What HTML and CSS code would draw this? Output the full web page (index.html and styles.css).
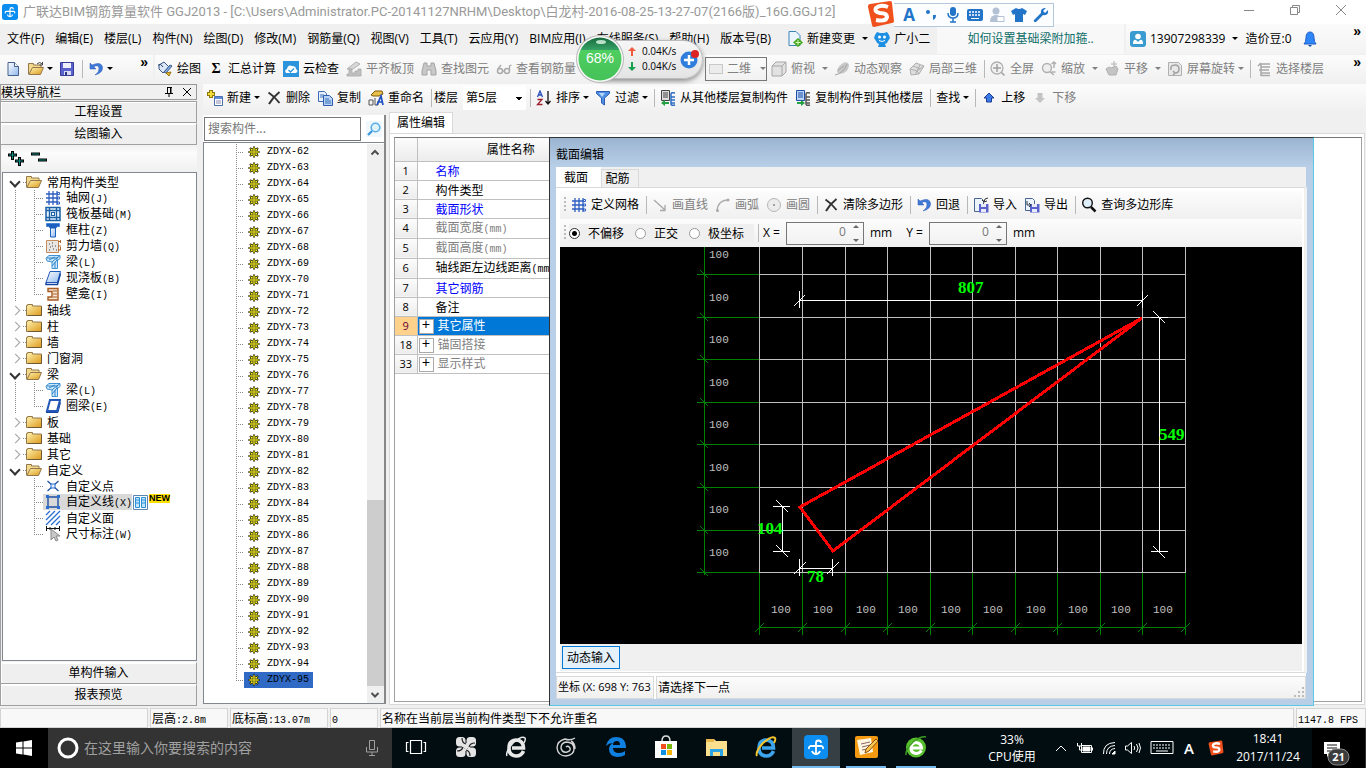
FILE: index.html
```html
<!DOCTYPE html>
<html lang="zh-CN">
<head>
<meta charset="utf-8">
<title>广联达BIM钢筋算量软件 GGJ2013</title>
<link rel="stylesheet" href="styles.css">
</head>
<body>
<svg class="defs" aria-hidden="true">
  <defs>
    <linearGradient id="gFold" x1="0" y1="0" x2="1" y2="1"><stop offset="0" stop-color="#fff3b0"/><stop offset="1" stop-color="#dc9a1c"/></linearGradient>
    <linearGradient id="gBlue" x1="0" y1="0" x2="1" y2="1"><stop offset="0" stop-color="#fff"/><stop offset="1" stop-color="#8fb8ec"/></linearGradient>
    <linearGradient id="gGreen" x1="0" y1="0" x2="0" y2="1"><stop offset="0" stop-color="#176b3e"/><stop offset=".28" stop-color="#35a063"/><stop offset=".29" stop-color="#4fce60"/><stop offset="1" stop-color="#45c258"/></linearGradient>
    <symbol id="logo" viewBox="0 0 24 24"><rect x="0" y="0" width="24" height="24" rx="4" fill="#0c8ef0"/><path d="M12 18V8q0-2.500 2.500-2.500T17 8M6 11h12M6 11q-1.500 1-1 3M18 11q1.500 1 1 3M8 16q1 3 4 3t4-3" fill="none" stroke="#fff" stroke-width="1.800"/></symbol>
    <symbol id="gear" viewBox="0 0 16 16"><path d="M7 3h2v2H7zM7 11h2v2H7zM3 7h2v2H3zM11 7h2v2h-2z" fill="#111"/><path d="M8 2.500v11M2.500 8h11M4 4l8 8M12 4l-8 8" stroke="#111" stroke-width="2"/><circle cx="8" cy="8" r="4" fill="#f8f010" stroke="#222" stroke-width=".8"/><path d="M8 3v10M3 8h10M4.500 4.500l7 7M11.500 4.500l-7 7" stroke="#f8f010"/><path d="M6 6h4v4H6z" fill="none" stroke="#333" stroke-width=".8"/><rect x="7.500" y="7.500" width="1" height="1" fill="#222"/></symbol>
    <symbol id="folder" viewBox="0 0 16 16"><path d="M.5 3.500h1v-1h5v1.500h9v9.500H.5z" fill="url(#gFold)" stroke="#94784a"/><path d="M2 13.500h13.500V5" fill="none" stroke="#6f5a34"/></symbol>
    <symbol id="folderopen" viewBox="0 0 16 16"><path d="M.5 13V2.500h5v1.500h7.500v3" fill="#f2d98c" stroke="#94784a"/><path d="M.8 13.500L4.500 6.500H15.500L12.500 13.500z" fill="url(#gFold)" stroke="#94784a"/></symbol>
    <symbol id="grid" viewBox="0 0 16 16"><path d="M4 1v14M8 1v14M12 1v14M1 4h12M1 8h12M1 12h12" stroke="#2f5fc0" stroke-width="1.300"/><path d="M12.500 2.500h2v2h-2zM12.500 7h2v2h-2zM12.500 12h2v2h-2z" fill="#fff" stroke="#2f5fc0"/></symbol>
    <symbol id="raft" viewBox="0 0 16 16"><rect x="1" y="1.500" width="14" height="13" fill="#e4f0fb" stroke="#1b5fa4" stroke-width="1.500"/><path d="M4.500 1v14M11.500 1v14M1 4.500h14M1 11.500h14" stroke="#1b5fa4" stroke-width="1.300"/><rect x="6.500" y="6.500" width="3" height="3" fill="#fff" stroke="#1b5fa4"/></symbol>
    <symbol id="column" viewBox="0 0 16 16"><path d="M1.500 1.500h13v3h-2l-2 2h-5l-2-2h-2z" fill="#1c5fc0" stroke="#4a86d8"/><path d="M5.500 6h5v9h-5z" fill="url(#gBlue)" stroke="#1c5fc0"/></symbol>
    <symbol id="wall" viewBox="0 0 16 16"><path d="M1.500 2.500h12v12h-12z" fill="#e8e6e2" stroke="#c48a5a"/><path d="M15.500 2v3M13 3.500h3M13 8h3M13 12h3M15.500 9v3" stroke="#b4682c"/><path d="M4 6h1M7 5h1M10 8h1M5 9h1M8 11h1M4 12h1M11 12h1M7 8h1" stroke="#444"/></symbol>
    <symbol id="beam" viewBox="0 0 16 16"><path d="M1 4l3-2.500h11v3l-2.500 2v8H7V8L2 7z" fill="#cfe8fb" stroke="#3f92d4"/><path d="M2 4h10l3-2.500M4 6l6-3M7 8l6-5M7 12l5-6M12 4v3M10 8v6" stroke="#2b84c8" fill="none"/></symbol>
    <symbol id="slab" viewBox="0 0 16 16"><path d="M5 1.500h10.500l-3 11H1z" fill="url(#gBlue)" stroke="#2358b8"/><path d="M1 12.500v2h11.500l3-11" fill="none" stroke="#1545a0" stroke-width="1.500"/></symbol>
    <symbol id="ring" viewBox="0 0 16 16"><path d="M5 2h10l-3 11H2z" fill="none" stroke="#2358b8" stroke-width="2"/><path d="M1 14.500h12l2.500-10" fill="none" stroke="#1545a0"/></symbol>
    <symbol id="niche" viewBox="0 0 16 16"><path d="M3 2.500h10v11.500H3v-3h4V5.500H3z" fill="#f6e6d4" stroke="#a85a20" stroke-width="1.400"/><path d="M8 5h4M8 8h4M8 11h4" stroke="#a85a20"/></symbol>
    <symbol id="pt" viewBox="0 0 16 16"><path d="M2.500 3l11 10M13.500 3l-11 10" stroke="#1d4e9e" stroke-width="1.200"/><rect x="6" y="6" width="4" height="4" fill="#e4f0fc" stroke="#2a6fd0"/></symbol>
    <symbol id="rectn" viewBox="0 0 16 16"><path d="M3 3h10v10H3z" fill="none" stroke="#1d4e9e" stroke-width="1.400"/><path d="M1 1h3v3H1zM12 1h3v3h-3zM1 12h3v3H1zM12 12h3v3h-3z" fill="#2a6fd0"/></symbol>
    <symbol id="hatch" viewBox="0 0 16 16"><path d="M1 5l4-4M1 10l9-9M1 15L15 1M6 15l9-9M11 15l4-4" stroke="#2a6fd0" stroke-width="1.300"/></symbol>
    <symbol id="dim" viewBox="0 0 16 16"><path d="M1.500 0v5M14.500 0v5M1 2.500h14M5 1v3M10 1v3" stroke="#111"/><path d="M6 3v11l3-3 2 4 2-1-2-4h4z" fill="#c8c8c8" stroke="#888"/></symbol>
    <symbol id="new" viewBox="0 0 16 16"><path d="M3 1.500h6.500l4 4v9H3z" fill="url(#gBlue)" stroke="#44608c"/><path d="M9.500 1.500v4h4" fill="#fff" stroke="#44608c"/></symbol>
    <symbol id="open" viewBox="0 0 16 16"><use href="#folderopen"/><path d="M9 3q3-3 5 0M14.500 1v3h-3" fill="none" stroke="#444"/></symbol>
    <symbol id="save" viewBox="0 0 16 16"><path d="M1.500 1.500h13v13h-13z" fill="#5a62cc" stroke="#363c98"/><path d="M4 2h8v5H4z" fill="#eef0fc"/><path d="M5 10h7v4H5z" fill="#d8daf2"/><path d="M6 11h2v3H6z" fill="#30368c"/></symbol>
    <symbol id="undo" viewBox="0 0 16 16"><path d="M2 2v6h6L5.800 5.800Q10 3 11 7q.5 4-4 7 8-2 7.500-8Q13 0 4 4z" fill="#3f7ad8" stroke="#2c58b4" stroke-width=".5"/></symbol>
    <symbol id="paint" viewBox="0 0 16 16"><path d="M2 4l5-3 5 5-6 6-4-4z" fill="#dbe7f6" stroke="#3c5684"/><path d="M1 4q3-2 5 2" fill="none" stroke="#27406c"/><path d="M15 5l-6 7-2-1 6-7z" fill="#7fb0e8" stroke="#3c5684"/><path d="M9 12l5-1-2 4z" fill="#e8b830" stroke="#9c7412"/></symbol>
    <symbol id="cloud" viewBox="0 0 16 16"><rect width="16" height="16" fill="#2b94dc"/><path d="M3 12q-2-3 1-4 1-5 5-3 4 0 4 3 3 2 0 4z" fill="#fff"/><path d="M5.500 9l2 2L11 7.500" fill="none" stroke="#2b94dc" stroke-width="1.300"/></symbol>
    <symbol id="level" viewBox="0 0 16 16"><path d="M1 8l9-7 4 2-7 5z" fill="#d8d8d8" stroke="#b0b0b0"/><path d="M3 8v5H1v2h14V8h-3v2H9v2H6V8z" fill="#c0c0c0" stroke="#a8a8a8" stroke-width=".8"/></symbol>
    <symbol id="bino" viewBox="0 0 16 16"><path d="M3 2h3v3h4V2h3l2 8v4h-5V9H6v5H1v-4z" fill="#c8c8c8" stroke="#a4a4a4"/></symbol>
    <symbol id="glasses" viewBox="0 0 16 16"><circle cx="4" cy="10" r="2.500" fill="none" stroke="#aaa" stroke-width="1.500"/><circle cx="11" cy="10" r="2.500" fill="none" stroke="#aaa" stroke-width="1.500"/><path d="M2 8l3-4M13.500 10V5l2-1M6.500 10h2" fill="none" stroke="#aaa" stroke-width="1.300"/></symbol>
    <symbol id="cube" viewBox="0 0 16 16"><path d="M1 5l4-4h10v10l-4 4H1z" fill="#e2e2e2" stroke="#a6a6a6"/><path d="M1 5h10v10M11 5l4-4" fill="none" stroke="#a6a6a6"/></symbol>
    <symbol id="orbit" viewBox="0 0 16 16"><path d="M9 2q5-2 6 2 0 5-5 8-5 2-7-1 0-5 6-9z" fill="#c8c8c8"/><path d="M1 14Q10 12 13 3M4 9l6-4" fill="none" stroke="#a4a4a4"/></symbol>
    <symbol id="part3d" viewBox="0 0 16 16"><path d="M1 8l6-6 8 3-5 8-8 1z" fill="#dedede" stroke="#b0b0b0"/><path d="M1 8l7 2 7-5M8 10l2 3M4 5l8 3M6 14l2-4 3-6" fill="none" stroke="#b0b0b0"/></symbol>
    <symbol id="full" viewBox="0 0 16 16"><circle cx="7" cy="7" r="6" fill="#f2f2f2" stroke="#b0b0b0" stroke-width="1.300"/><path d="M7 3v8M3 7h8M11.500 11.500l3 3" stroke="#a0a0a0" stroke-width="1.500"/></symbol>
    <symbol id="zoomg" viewBox="0 0 16 16"><circle cx="6" cy="7" r="4.500" fill="#eee" stroke="#b0b0b0" stroke-width="1.400"/><path d="M9 11l4 3M13 1v6M10.500 3l2.500-2 2 2M10.500 11h4" fill="none" stroke="#b0b0b0" stroke-width="1.500"/></symbol>
    <symbol id="hand" viewBox="0 0 16 16"><path d="M2 8l3-2 2 1 5-2 2 3-2 6H5z" fill="#c4c4c4" stroke="#b0b0b0"/><path d="M10 0v6M7 3h6" stroke="#b0b0b0"/></symbol>
    <symbol id="rot" viewBox="0 0 16 16"><path d="M1.500 1.500h10l3 3v10h-13z" fill="#e8e8e8" stroke="#b0b0b0"/><path d="M4 9q-1-5 4-5 4 0 4 4t-4 4M6 10l2 2-2 2" fill="none" stroke="#a0a0a0" stroke-width="1.500"/></symbol>
    <symbol id="floors" viewBox="0 0 16 16"><path d="M5 3h9M5 6h9M3 9h10M5 12h9M5 14.500h9M2 5l3-3M5 3v12" stroke="#a8a8a8" stroke-width="1.500"/></symbol>
    <symbol id="add" viewBox="0 0 16 16"><path d="M4 0v8M0 4h8" stroke="#8c7a10" stroke-width="4"/><path d="M4 1v6M1 4h6" stroke="#f2dc3c" stroke-width="2"/><path d="M7.500 6.500h8v9h-8z" fill="#fff" stroke="#4a6fae"/><path d="M8 8h7" stroke="#5b8ede" stroke-width="2"/><path d="M9 11h5M9 13h5" stroke="#88a"/></symbol>
    <symbol id="x" viewBox="0 0 16 16"><path d="M2.500 2.500Q8 6 13.500 13M13.500 2Q7 7 3 14" fill="none" stroke="#333" stroke-width="2"/></symbol>
    <symbol id="copy" viewBox="0 0 16 16"><path d="M1.500 1.500h6l2 2v8h-8z" fill="#e8f1fd" stroke="#3b6cb8"/><path d="M6.500 5.500h6l3 3v7h-9z" fill="#b8d3f6" stroke="#2c5cac"/><path d="M3 5h4M3 7h3M8 9h4M8 11h6M8 13h6" stroke="#3b6cb8"/></symbol>
    <symbol id="rename" viewBox="0 0 16 16"><path d="M3 5l4-4h7l1 3-4 2H5z" fill="#e8c048" stroke="#7c5a10"/><path d="M1 10h4v5H1zM7 8v7h3v-4" fill="none" stroke="#555"/><path d="M9 15l4-9 2 9M10 12h4" fill="none" stroke="#1e4fc0" stroke-width="1.700"/></symbol>
    <symbol id="sort" viewBox="0 0 16 16"><path d="M1.500 7L4 1l2.500 6M2 5h4" fill="none" stroke="#2850b8" stroke-width="1.300"/><path d="M1.500 9.500h4.500l-4.500 5H6.500" fill="none" stroke="#a02030" stroke-width="1.300"/><path d="M12 1v13M9.500 11l2.500 3 2.500-3" fill="none" stroke="#111" stroke-width="1.300"/></symbol>
    <symbol id="funnel" viewBox="0 0 16 16"><path d="M1.500 1.500h13v2l-5 4.500v7l-3-2V8l-5-4.500z" fill="#4f90e4" stroke="#2a5cb4"/><path d="M4 3h6l-3 4z" fill="#b8d6fa"/></symbol>
    <symbol id="bldfrom" viewBox="0 0 16 16"><path d="M1.500.5h8v10h-8z" fill="#ddd" stroke="#444"/><path d="M3 3h5M3 5h5M3 7h5" stroke="#444"/><path d="M15 3q-4-1-4 1v10q0 2 4 1M11 7h4M11 10h4M11 13h4" fill="none" stroke="#2c6cc0" stroke-width="1.500"/><path d="M9 12H5v-2l-4 3 4 3v-2h4z" fill="#26a044"/></symbol>
    <symbol id="bldto" viewBox="0 0 16 16"><path d="M1.500.5h8v10h-8z" fill="#bdd5f8" stroke="#1d4ea8"/><path d="M3 3h5M3 5h5M3 7h5" stroke="#1d4ea8"/><path d="M15 3q-4-1-4 1v10q0 2 4 1M11 7h4M11 10h4M11 13h4" fill="none" stroke="#555" stroke-width="1.500"/><path d="M2 12h4v-2l4 3-4 3v-2H2z" fill="#26a044"/></symbol>
    <symbol id="up" viewBox="0 0 16 16"><path d="M8 3l5 5h-2.500v4h-5V8H3z" fill="#3a7be8" stroke="#1d3c94"/></symbol>
    <symbol id="down" viewBox="0 0 16 16"><path d="M8 13l5-5h-2.500V3h-5v5H3z" fill="#c4c4c4"/></symbol>
    <symbol id="docadd" viewBox="0 0 16 16"><path d="M2 .5h7l4 4v10H2z" fill="#eaf5fd" stroke="#3d84b8"/><path d="M11 7l5 4.500-5 4.500-5-4.500z" fill="#46a820"/><path d="M11 9v5M8.500 11.500h5" stroke="#d8f8b8"/></symbol>
    <symbol id="face" viewBox="0 0 16 16"><path d="M1 4l2-3 3 1h4l3-1 2 3 1 3-2 3q-1 3-3 3l1 3H4l1-3q-2 0-3-3L0 7z" fill="#1e90e4"/><circle cx="5.500" cy="6" r="1.500" fill="#fff"/><circle cx="10.500" cy="6" r="1.500" fill="#fff"/><path d="M5 9.500q3 2 6 0" fill="none" stroke="#fff"/></symbol>
    <symbol id="user" viewBox="0 0 16 16"><rect width="16" height="16" rx="3" fill="#3a9bd0"/><circle cx="8" cy="5.500" r="2.800" fill="#fff"/><path d="M3 13q0-5 3-4l2 2 2-2q3-1 3 4z" fill="#fff"/></symbol>
    <symbol id="bell" viewBox="0 0 16 16"><path d="M2 13q2-2 2-6 0-6 4-6t4 6q0 4 2 6z" fill="#2f86f6" stroke="#1c5cc8"/><path d="M6 14h4l-2 2z" fill="#184a9c"/></symbol>
    <symbol id="lens" viewBox="0 0 16 16"><circle cx="6.500" cy="6" r="4.800" fill="#dff0fb" stroke="#111" stroke-width="1.400"/><path d="M10 10l4.500 4.500" stroke="#111" stroke-width="2.500"/></symbol>
    <symbol id="lensb" viewBox="0 0 16 16"><rect width="16" height="16" fill="#f0f7fd"/><circle cx="9.500" cy="6.500" r="4.300" fill="#e0f3fd" stroke="#58aee6" stroke-width="1.600"/><path d="M6 10l-4 4" stroke="#3c96d8" stroke-width="2.300"/></symbol>
    <symbol id="line" viewBox="0 0 16 16"><path d="M2 3l11 10M13 8v5.500H8" fill="none" stroke="#a8a8a8" stroke-width="1.300"/></symbol>
    <symbol id="arc" viewBox="0 0 16 16"><path d="M2 14Q3 3 13 3" fill="none" stroke="#b0b0b0" stroke-width="1.400"/><circle cx="2.500" cy="13.500" r="1.500" fill="#aaa"/><circle cx="13" cy="3" r="1.500" fill="#aaa"/></symbol>
    <symbol id="circ" viewBox="0 0 16 16"><circle cx="8" cy="8" r="6.500" fill="#ececec" stroke="#b6b6b6"/><circle cx="8" cy="8" r="1" fill="#888"/></symbol>
    <symbol id="imp" viewBox="0 0 16 16"><path d="M1.500 1.500h7l2 2v11h-9z" fill="#eef4fc" stroke="#4a6490"/><path d="M6 7h9.500v8.500H6z" fill="#5a62cc"/><path d="M8 7h5v3H8zM8 12h5v3H8z" fill="#e8eafa"/><path d="M15 1q-4 0-4 4M9 3l2 2 3-1" fill="none" stroke="#333"/></symbol>
    <symbol id="exp" viewBox="0 0 16 16"><path d="M1.500 1.500h7l2 2v10h-9z" fill="#eef4fc" stroke="#4a6490"/><path d="M6 7h9.500v8.500H6z" fill="#5a62cc"/><path d="M8 7h5v3H8zM8 12h5v3H8z" fill="#e8eafa"/><path d="M3 4v4h4M5 6l2 2-2 2" fill="none" stroke="#234"/></symbol>
    <symbol id="sogou" viewBox="0 0 28 28"><path d="M3 4L23 1q2 0 2 2l2 18q0 2-2 2L7 27q-2 0-2-2L1 7q0-3 2-3z" fill="#f0501c"/><path d="M21 7q-8-3-12 1-2 4 4 5 7 0 7 4-1 5-11 3" fill="none" stroke="#fff" stroke-width="4"/></symbol>
    <symbol id="ie" viewBox="0 0 24 24"><path d="M19.500 16q-2 5-7.500 5-7-.5-7-8 0-7.500 7-8 7.500.5 7.500 8H8" fill="none" stroke="currentColor" stroke-width="3.600"/></symbol>
  </defs>
</svg>

<header class="titlebar">
  <svg class="i16"><use href="#logo"/></svg>
  <h1>广联达BIM钢筋算量软件 GGJ2013 - [C:\Users\Administrator.PC-20141127NRHM\Desktop\白龙村-2016-08-25-13-27-07(2166版)_16G.GGJ12]</h1>
  <div class="winbtns">
    <button aria-label="最小化"><svg viewBox="0 0 12 12"><path d="M1 6.500h10"/></svg></button>
    <button aria-label="还原"><svg viewBox="0 0 12 12"><path d="M1.500 3.500h7v7h-7zM3.500 3.500v-2h7v7h-2"/></svg></button>
    <button aria-label="关闭"><svg viewBox="0 0 12 12"><path d="M1 1l10 10M11 1L1 11"/></svg></button>
  </div>
</header>

<nav class="menubar">
  <div class="menus">
    <button>文件(F)</button><button>编辑(E)</button><button>楼层(L)</button><button>构件(N)</button><button>绘图(D)</button><button>修改(M)</button><button>钢筋量(Q)</button><button>视图(V)</button><button>工具(T)</button><button>云应用(Y)</button><button>BIM应用(I)</button><button>在线服务(S)</button><button>帮助(H)</button><button>版本号(B)</button>
  </div>
  <button class="tb"><svg class="i16"><use href="#docadd"/></svg>新建变更<i class="arr wide"></i></button>
  <button class="tb"><svg class="i16"><use href="#face"/></svg>广小二</button>
  <a class="tip" href="#">如何设置基础梁附加箍..</a>
  <div class="account">
    <button class="tb"><svg class="i16"><use href="#user"/></svg>13907298339<i class="arr wide"></i></button>
    <span>造价豆:0</span>
    <svg class="i16"><use href="#bell"/></svg>
    <button class="more">»</button>
  </div>
</nav>

<div class="toolbar main-tools">
  <div class="group first">
    <button class="tb" aria-label="新建工程"><svg class="i16"><use href="#new"/></svg></button>
    <button class="tb" aria-label="打开"><svg class="i16"><use href="#open"/></svg><i class="arr"></i></button>
    <button class="tb" aria-label="保存"><svg class="i16"><use href="#save"/></svg></button>
    <i class="sep"></i>
    <button class="tb" aria-label="撤销"><svg class="i16"><use href="#undo"/></svg><i class="arr"></i></button>
    <button class="more">»</button>
  </div>
  <div class="group second">
    <button class="tb"><svg class="i16"><use href="#paint"/></svg>绘图</button>
    <button class="tb"><b class="sigma">Σ</b>汇总计算</button>
    <button class="tb"><svg class="i16"><use href="#cloud"/></svg>云检查</button>
    <button class="tb off"><svg class="i16"><use href="#level"/></svg>平齐板顶</button>
    <button class="tb off"><svg class="i16"><use href="#bino"/></svg>查找图元</button>
    <button class="tb off"><svg class="i16"><use href="#glasses"/></svg>查看钢筋量</button>
  </div>
  <div class="group third">
    <button class="tb off dimcombo"><i class="swatch"></i>二维<i class="arr"></i></button>
    <button class="tb off"><svg class="i16"><use href="#cube"/></svg>俯视<i class="arr wide"></i></button>
    <button class="tb off"><svg class="i16"><use href="#orbit"/></svg>动态观察</button>
    <button class="tb off"><svg class="i16"><use href="#part3d"/></svg>局部三维</button>
    <i class="sep"></i>
    <button class="tb off"><svg class="i16"><use href="#full"/></svg>全屏</button>
    <button class="tb off"><svg class="i16"><use href="#zoomg"/></svg>缩放<i class="arr wide"></i></button>
    <button class="tb off"><svg class="i16"><use href="#hand"/></svg>平移<i class="arr wide"></i></button>
    <button class="tb off"><svg class="i16"><use href="#rot"/></svg>屏幕旋转<i class="arr"></i></button>
    <i class="sep"></i>
    <button class="tb off"><svg class="i16"><use href="#floors"/></svg>选择楼层</button>
    <button class="more">»</button>
  </div>
</div>

<main class="work">
  <aside class="nav">
    <div class="navhead"><span>模块导航栏</span>
      <svg viewBox="0 0 10 10" class="i10"><path d="M3 .5h5M3.500 1v5M7 1v5M6.500 1v5M1 6.500h8M5 7v3" stroke="#000" fill="none"/></svg>
      <svg viewBox="0 0 10 10" class="i10"><path d="M1 1l8 8M9 1L1 9" stroke="#000"/></svg></div>
    <button class="bigbtn">工程设置</button>
    <button class="bigbtn">绘图输入</button>
    <div class="expand">
      <svg width="42" height="18" viewBox="0 0 42 18"><path d="M1 6h9M5.500 2v9M8 12h9M12.500 8v9M24 5h9M31 11h9" stroke="#000" stroke-width="3"/><path d="M2 6h7M5.500 3v7M9 12h7M12.500 9v7M25 5h7M32 11h7" stroke="#118a80"/></svg>
    </div>
    <ul class="tree">
      <li><i class="chev open"></i><i class="stub"></i><svg class="i16"><use href="#folderopen"/></svg>常用构件类型</li>
      <li class="sub run"><i class="branch"></i><svg class="i16"><use href="#grid"/></svg><span>轴网<span class="m">(J)</span></span></li>
      <li class="sub run"><i class="branch"></i><svg class="i16"><use href="#raft"/></svg><span>筏板基础<span class="m">(M)</span></span></li>
      <li class="sub run"><i class="branch"></i><svg class="i16"><use href="#column"/></svg><span>框柱<span class="m">(Z)</span></span></li>
      <li class="sub run"><i class="branch"></i><svg class="i16"><use href="#wall"/></svg><span>剪力墙<span class="m">(Q)</span></span></li>
      <li class="sub run"><i class="branch"></i><svg class="i16"><use href="#beam"/></svg><span>梁<span class="m">(L)</span></span></li>
      <li class="sub run"><i class="branch"></i><svg class="i16"><use href="#slab"/></svg><span>现浇板<span class="m">(B)</span></span></li>
      <li class="sub run"><i class="branch end"></i><svg class="i16"><use href="#niche"/></svg><span>壁龛<span class="m">(I)</span></span></li>
      <li><i class="chev"></i><i class="stub"></i><svg class="i16"><use href="#folder"/></svg>轴线</li>
      <li><i class="chev"></i><i class="stub"></i><svg class="i16"><use href="#folder"/></svg>柱</li>
      <li><i class="chev"></i><i class="stub"></i><svg class="i16"><use href="#folder"/></svg>墙</li>
      <li><i class="chev"></i><i class="stub"></i><svg class="i16"><use href="#folder"/></svg>门窗洞</li>
      <li><i class="chev open"></i><i class="stub"></i><svg class="i16"><use href="#folderopen"/></svg>梁</li>
      <li class="sub run"><i class="branch"></i><svg class="i16"><use href="#beam"/></svg><span>梁<span class="m">(L)</span></span></li>
      <li class="sub run"><i class="branch end"></i><svg class="i16"><use href="#ring"/></svg><span>圈梁<span class="m">(E)</span></span></li>
      <li><i class="chev"></i><i class="stub"></i><svg class="i16"><use href="#folder"/></svg>板</li>
      <li><i class="chev"></i><i class="stub"></i><svg class="i16"><use href="#folder"/></svg>基础</li>
      <li><i class="chev"></i><i class="stub"></i><svg class="i16"><use href="#folder"/></svg>其它</li>
      <li><i class="chev open"></i><i class="stub"></i><svg class="i16"><use href="#folderopen"/></svg>自定义</li>
      <li class="sub"><i class="branch"></i><svg class="i16"><use href="#pt"/></svg><span>自定义点</span></li>
      <li class="sub"><i class="branch"></i><span class="picked"><svg class="i16"><use href="#rectn"/></svg><span>自定义线<span class="m">(X)</span></span></span><svg class="book" viewBox="0 0 15 15"><path d="M.5.5h14v14H.5z" fill="#fff" stroke="#5a86b0"/><path d="M2.500 2.500h4v10h-4zM8.500 2.500h4v10h-4z" fill="#bfe4fb" stroke="#2a90d8"/><path d="M3 5h3M3 8h3M9 5h3M9 8h3" stroke="#2a90d8"/></svg><b class="newtag">NEW</b></li>
      <li class="sub"><i class="branch"></i><svg class="i16"><use href="#hatch"/></svg><span>自定义面</span></li>
      <li class="sub"><i class="branch end"></i><svg class="i16"><use href="#dim"/></svg><span>尺寸标注<span class="m">(W)</span></span></li>
    </ul>
    <button class="bigbtn">单构件输入</button>
    <button class="bigbtn">报表预览</button>
  </aside>

  <section class="right">
    <div class="toolbar comp-tools">
      <button class="tb"><svg class="i16"><use href="#add"/></svg>新建<i class="arr"></i></button>
      <button class="tb"><svg class="i16"><use href="#x"/></svg>删除</button>
      <button class="tb"><svg class="i16"><use href="#copy"/></svg>复制</button>
      <button class="tb"><svg class="i16"><use href="#rename"/></svg>重命名</button>
      <i class="sep"></i>
      <label class="floor">楼层<select><option>第5层</option></select></label>
      <i class="sep"></i>
      <button class="tb"><svg class="i16"><use href="#sort"/></svg>排序<i class="arr"></i></button>
      <button class="tb"><svg class="i16"><use href="#funnel"/></svg>过滤<i class="arr"></i></button>
      <i class="sep"></i>
      <button class="tb"><svg class="i16"><use href="#bldfrom"/></svg>从其他楼层复制构件</button>
      <button class="tb"><svg class="i16"><use href="#bldto"/></svg>复制构件到其他楼层</button>
      <i class="sep"></i>
      <button class="tb">查找<i class="arr"></i></button>
      <i class="sep"></i>
      <button class="tb"><svg class="i16"><use href="#up"/></svg>上移</button>
      <button class="tb off"><svg class="i16"><use href="#down"/></svg>下移</button>
    </div>
    <div class="panes">
      <div class="complist">
        <div class="search"><input type="text" placeholder="搜索构件..." aria-label="搜索构件"><button aria-label="搜索"><svg class="i16"><use href="#lensb"/></svg></button></div>
        <div class="listbox">
          <ul class="items">
            <li><i class="branch"></i><span><svg class="i16"><use href="#gear"/></svg>ZDYX-62</span></li>
            <li><i class="branch"></i><span><svg class="i16"><use href="#gear"/></svg>ZDYX-63</span></li>
            <li><i class="branch"></i><span><svg class="i16"><use href="#gear"/></svg>ZDYX-64</span></li>
            <li><i class="branch"></i><span><svg class="i16"><use href="#gear"/></svg>ZDYX-65</span></li>
            <li><i class="branch"></i><span><svg class="i16"><use href="#gear"/></svg>ZDYX-66</span></li>
            <li><i class="branch"></i><span><svg class="i16"><use href="#gear"/></svg>ZDYX-67</span></li>
            <li><i class="branch"></i><span><svg class="i16"><use href="#gear"/></svg>ZDYX-68</span></li>
            <li><i class="branch"></i><span><svg class="i16"><use href="#gear"/></svg>ZDYX-69</span></li>
            <li><i class="branch"></i><span><svg class="i16"><use href="#gear"/></svg>ZDYX-70</span></li>
            <li><i class="branch"></i><span><svg class="i16"><use href="#gear"/></svg>ZDYX-71</span></li>
            <li><i class="branch"></i><span><svg class="i16"><use href="#gear"/></svg>ZDYX-72</span></li>
            <li><i class="branch"></i><span><svg class="i16"><use href="#gear"/></svg>ZDYX-73</span></li>
            <li><i class="branch"></i><span><svg class="i16"><use href="#gear"/></svg>ZDYX-74</span></li>
            <li><i class="branch"></i><span><svg class="i16"><use href="#gear"/></svg>ZDYX-75</span></li>
            <li><i class="branch"></i><span><svg class="i16"><use href="#gear"/></svg>ZDYX-76</span></li>
            <li><i class="branch"></i><span><svg class="i16"><use href="#gear"/></svg>ZDYX-77</span></li>
            <li><i class="branch"></i><span><svg class="i16"><use href="#gear"/></svg>ZDYX-78</span></li>
            <li><i class="branch"></i><span><svg class="i16"><use href="#gear"/></svg>ZDYX-79</span></li>
            <li><i class="branch"></i><span><svg class="i16"><use href="#gear"/></svg>ZDYX-80</span></li>
            <li><i class="branch"></i><span><svg class="i16"><use href="#gear"/></svg>ZDYX-81</span></li>
            <li><i class="branch"></i><span><svg class="i16"><use href="#gear"/></svg>ZDYX-82</span></li>
            <li><i class="branch"></i><span><svg class="i16"><use href="#gear"/></svg>ZDYX-83</span></li>
            <li><i class="branch"></i><span><svg class="i16"><use href="#gear"/></svg>ZDYX-84</span></li>
            <li><i class="branch"></i><span><svg class="i16"><use href="#gear"/></svg>ZDYX-85</span></li>
            <li><i class="branch"></i><span><svg class="i16"><use href="#gear"/></svg>ZDYX-86</span></li>
            <li><i class="branch"></i><span><svg class="i16"><use href="#gear"/></svg>ZDYX-87</span></li>
            <li><i class="branch"></i><span><svg class="i16"><use href="#gear"/></svg>ZDYX-88</span></li>
            <li><i class="branch"></i><span><svg class="i16"><use href="#gear"/></svg>ZDYX-89</span></li>
            <li><i class="branch"></i><span><svg class="i16"><use href="#gear"/></svg>ZDYX-90</span></li>
            <li><i class="branch"></i><span><svg class="i16"><use href="#gear"/></svg>ZDYX-91</span></li>
            <li><i class="branch"></i><span><svg class="i16"><use href="#gear"/></svg>ZDYX-92</span></li>
            <li><i class="branch"></i><span><svg class="i16"><use href="#gear"/></svg>ZDYX-93</span></li>
            <li><i class="branch"></i><span><svg class="i16"><use href="#gear"/></svg>ZDYX-94</span></li>
            <li class="sel"><i class="branch end"></i><span><svg class="i16"><use href="#gear"/></svg>ZDYX-95</span></li>
          </ul>
          <div class="scroll">
            <svg class="sarr" viewBox="0 0 16 16"><path d="M4.500 10L8 6.500l3.500 3.500"/></svg>
            <i class="track"></i><i class="thumb"></i>
            <svg class="sarr" viewBox="0 0 16 16"><path d="M4.500 6.500L8 10l3.500-3.500"/></svg>
          </div>
        </div>
      </div>
      <div class="props">
        <div class="ptab">属性编辑</div>
        <div class="pbody"><div class="pframe">
          <table>
            <thead><tr><th></th><th>属性名称</th></tr></thead>
            <tbody>
              <tr><th>1</th><td class="blue">名称</td></tr>
              <tr><th>2</th><td>构件类型</td></tr>
              <tr><th>3</th><td class="blue">截面形状</td></tr>
              <tr><th>4</th><td class="gray">截面宽度<span class="m">(mm)</span></td></tr>
              <tr><th>5</th><td class="gray">截面高度<span class="m">(mm)</span></td></tr>
              <tr><th>6</th><td>轴线距左边线距离<span class="m">(mm)</span></td></tr>
              <tr><th>7</th><td class="blue">其它钢筋</td></tr>
              <tr><th>8</th><td>备注</td></tr>
              <tr class="cur"><th>9</th><td class="grp">其它属性</td></tr>
              <tr><th>18</th><td class="gray grp">锚固搭接</td></tr>
              <tr><th>33</th><td class="gray grp">显示样式</td></tr>
            </tbody>
          </table>
        </div></div>
      </div>
    </div>
  </section>
</main>

<footer class="status">
  <span class="s1"></span>
  <span class="s2">层高<span class="m">:2.8m</span></span>
  <span class="s3">底标高<span class="m">:13.07m</span></span>
  <span class="s4"><span class="m">0</span></span>
  <span class="s5">名称在当前层当前构件类型下不允许重名</span>
  <span class="s6"><span class="m">1147.8 FPS</span></span>
</footer>

<footer class="taskbar">
  <button class="start" aria-label="开始"><svg width="16" height="16" viewBox="0 0 16 16"><path d="M0 2.500L6.500 1.500v6H0zM7.500 1.400L16 0v7.500H7.500zM0 8.500h6.500v6L0 13.500zM7.500 8.500H16V16l-8.500-1.400z" fill="#fff"/></svg></button>
  <label class="cortana"><svg width="24" height="24" viewBox="0 0 24 24"><circle cx="12" cy="12" r="9" fill="none" stroke="#fff" stroke-width="3"/></svg><input type="text" placeholder="在这里输入你要搜索的内容"><svg width="12" height="18" viewBox="0 0 12 18"><path d="M3.500 1.500h5v9h-5zM.500 8v5h11V8M6 13v4M3 16.500h6" fill="none" stroke="#a0a0a0"/></svg></label>
  <div class="apps">
    <button aria-label="任务视图"><svg viewBox="0 0 24 24"><path d="M6.500 5.500h11v13h-11zM4.500 7.500h-2v9h2M19.500 7.500h2v9h-2" fill="none" stroke="#fff" stroke-width="1.200"/></svg></button>
    <button aria-label="四叶草"><svg viewBox="0 0 24 24"><rect x="2" y="2" width="9.500" height="9.500" rx="3.500" fill="#e4e4e4"/><rect x="12.500" y="2" width="9.500" height="9.500" rx="3.500" fill="#e4e4e4"/><rect x="2" y="12.500" width="9.500" height="9.500" rx="3.500" fill="#e4e4e4"/><rect x="12.500" y="12.500" width="9.500" height="9.500" rx="3.500" fill="#e4e4e4"/><path d="M8 11.500h8M12 8v8" stroke="#e4e4e4" stroke-width="3"/><path d="M8 3q0 5 4 6M21 8q-5 0-6 4M16 21q0-5-4-6M3 16q5 0 6-4" fill="none" stroke="#222" stroke-width="1.200"/></svg></button>
    <button aria-label="浏览器" class="wh"><svg viewBox="0 0 24 24"><use href="#ie"/><path d="M3 21Q1 17 9 8q9-8 12-5 1 1-1 5" fill="none" stroke="#e8e8e8" stroke-width="1.500"/></svg></button>
    <button aria-label="旋风"><svg viewBox="0 0 24 24"><path d="M21 3q-5 3-10 1-8 2-8 9 1 8 9 8 8-1 8-7 0-7-8-7-5 1-5 6 1 5 6 4 4-1 3-4-2-3-4-1M17 6q4 2 4 8" fill="none" stroke="#d4d4d4" stroke-width="1.400"/></svg></button>
    <button aria-label="Edge"><svg viewBox="0 0 24 24"><path d="M2 11Q4 2 12 2q10 0 10 11H9q0 5 6 5 4 0 6-2v4q-3 2-8 2-8-1-8-8 0-4 4-6-4 0-7 3zm7-1h7q0-4-3-4-4 0-4 4z" fill="#0f7fe0"/></svg></button>
    <button aria-label="商店"><svg viewBox="0 0 24 24"><path d="M8 6q0-5 4-5t4 5" fill="none" stroke="#ddd" stroke-width="1.500"/><path d="M1 6h22v17H1z" fill="#fff"/><path d="M7 9h5v5H7z" fill="#f04e1c"/><path d="M13 9h5v5h-5z" fill="#7cb80c"/><path d="M7 15h5v5H7z" fill="#1090e0"/><path d="M13 15h5v5h-5z" fill="#f8b40c"/></svg></button>
    <button aria-label="文件资源管理器"><svg viewBox="0 0 24 24"><path d="M2 4h8l2 2h11v15H2z" fill="#fae08e"/><path d="M2 4h8v3H2z" fill="#e8b84c"/><path d="M6 21v-7h13v7h-3v-4H9v4z" fill="#2aa4e4"/></svg></button>
    <button aria-label="Internet Explorer" class="ieb"><svg viewBox="0 0 24 24"><use href="#ie"/><path d="M3 21Q1 17 9 8q9-8 12-5 1 1-1 5" fill="none" stroke="#f4c430" stroke-width="2"/></svg></button>
    <button aria-label="广联达" class="active"><svg viewBox="0 0 24 24"><use href="#logo"/></svg></button>
    <button aria-label="便笺" class="running"><svg viewBox="0 0 24 24"><rect x="1" y="1" width="23" height="22" rx="2" fill="#f49a12"/><path d="M3 5l14-2 2 14-13 3z" fill="#fff6e0"/><path d="M7 9l9-2M8 12l8-2M8 15l5-1" stroke="#866"/><path d="M22 4L12 14l-1 4 4-2 9-10z" fill="#f8c850" stroke="#8c4a10"/></svg></button>
    <button aria-label="安全浏览器" class="running"><svg viewBox="0 0 24 24"><circle cx="12" cy="12.500" r="10" fill="#58c02c"/><path d="M17.500 15.500q-2 3-5.500 3-5-.5-5-5.500t5-5.500q5 .5 5.500 5.500H8" fill="none" stroke="#fff" stroke-width="3"/><path d="M2 20Q1 15 9 7q8-6 13-5" fill="none" stroke="#3c9c20" stroke-width="1.500"/></svg></button>
  </div>
  <div class="cpu">33%<br>CPU使用</div>
  <div class="tray">
    <svg width="14" height="14" viewBox="0 0 14 14"><path d="M2 10l5-5 5 5"/></svg>
    <svg width="18" height="14" viewBox="0 0 18 14"><path d="M5.500 4.500h10v7h-10zM16.500 6.500v3M1.500 2v3h4V2M3.500 5v4h3"/><path d="M7 6h7v4H7z" fill="#fff"/></svg>
    <svg width="14" height="14" viewBox="0 0 14 14"><path d="M1.500 13Q1 2 13 1.500M4.500 13Q4.500 5 13 4.500M7.500 13q0-5 5.500-5.500"/><path d="M10 13l3-3v3z" fill="#fff"/></svg>
    <svg width="18" height="14" viewBox="0 0 18 14"><path d="M1.500 5h2l4-3.500v11L3.500 9h-2zM10 5q1.500 2 0 4M12.500 3q3 4 0 8M15 2q3 5 0 10"/></svg>
    <svg width="24" height="14" viewBox="0 0 24 14"><path d="M1 .5h22v12H1z"/><path d="M3 4h18M3 7h18" stroke-dasharray="2 1"/><path d="M6 10h12"/></svg>
    <b>A</b>
    <svg width="16" height="16" viewBox="0 0 28 28"><use href="#sogou"/></svg>
  </div>
  <div class="clock">18:41<br>2017/11/24</div>
  <button class="notes" aria-label="通知"><svg width="28" height="26" viewBox="0 0 28 26"><path d="M1 2h16v12H7l-3 3v-3H1z" fill="#fff"/><path d="M4 5h10M4 8h10M4 11h6" stroke="#111"/><rect x="5" y="9" width="21" height="16" rx="8" fill="#3c3c3c" stroke="#888"/><text x="15.500" y="21" text-anchor="middle" class="badge">21</text></svg></button>
</footer>

<section class="dialog" role="dialog" aria-label="截面编辑">
  <h2>截面编辑</h2>
  <div class="dtabs"><button class="on">截面</button><button>配筋</button></div>
  <div class="dpage">
    <div class="toolbar dtools">
      <i class="grip"></i>
      <button class="tb"><svg class="i16"><use href="#grid"/></svg>定义网格</button>
      <i class="sep"></i>
      <button class="tb off"><svg class="i16"><use href="#line"/></svg>画直线</button>
      <button class="tb off"><svg class="i16"><use href="#arc"/></svg>画弧</button>
      <button class="tb off"><svg class="i16"><use href="#circ"/></svg>画圆</button>
      <i class="sep"></i>
      <button class="tb"><svg class="i16"><use href="#x"/></svg>清除多边形</button>
      <i class="sep"></i>
      <button class="tb"><svg class="i16"><use href="#undo"/></svg>回退</button>
      <i class="sep"></i>
      <button class="tb"><svg class="i16"><use href="#imp"/></svg>导入</button>
      <button class="tb"><svg class="i16"><use href="#exp"/></svg>导出</button>
      <i class="sep"></i>
      <button class="tb"><svg class="i16"><use href="#lens"/></svg>查询多边形库</button>
    </div>
    <div class="toolbar dcoords">
      <i class="grip"></i>
      <div class="radios">
        <label><input type="radio" name="off" checked>不偏移</label>
        <label><input type="radio" name="off">正交</label>
        <label><input type="radio" name="off">极坐标</label>
      </div>
      <i class="sep"></i>
      <label class="num">X = <span class="spin"><input type="text" value="0"><i class="ud"></i></span></label><span class="unit">mm</span>
      <label class="num">Y = <span class="spin"><input type="text" value="0"><i class="ud"></i></span></label><span class="unit">mm</span>
    </div>
    <svg class="canvas" role="img" aria-label="截面图">
      <g transform="translate(-560 -247)" shape-rendering="crispEdges">
        <path class="gl" d="M759.500 247V572M802.500 247V572M845.500 247V572M887.500 247V572M930.500 247V572M972.500 247V572M1015.500 247V572M1057.500 247V572M1100.500 247V572M1142.500 247V572M1185.500 247V572M759 274.500H1186M759 317.500H1186M759 359.500H1186M759 402.500H1186M759 444.500H1186M759 487.500H1186M759 530.500H1186M759 572.500H1186"/>
        <path class="ax" d="M704.500 247V575M697 274.500H759M697 317.500H759M697 359.500H759M697 402.500H759M697 444.500H759M697 487.500H759M697 530.500H759M697 572.500H759M759 627.500H1186M759.500 573V635M802.500 573V635M845.500 573V635M887.500 573V635M930.500 573V635M972.500 573V635M1015.500 573V635M1057.500 573V635M1100.500 573V635M1142.500 573V635M1185.500 573V635"/>
        <path class="ax" d="M700 270l8 8M700 313l8 8M700 355l8 8M700 398l8 8M700 440l8 8M700 483l8 8M700 526l8 8M700 568l8 8M755 632l9-9M798 632l9-9M841 632l9-9M883 632l9-9M926 632l9-9M968 632l9-9M1011 632l9-9M1053 632l9-9M1096 632l9-9M1138 632l9-9M1181 632l9-9"/>
        <path class="dm" d="M799 300.500H1143M799.500 291V308M1142.500 291V308M794 306l11-11M1137 306l11-11M1159.500 317V552M1151 317.500H1168M1151 551.500H1168M1153 311l12 12M1153 546l12 12M782.500 506V552M773 506.500H790M773 551.500H790M776 500l12 12M776 545l12 12M799 568.500H833M799.500 559V576M832.500 559V576M794 574l12-12M827 574l12-12"/>
        <path class="poly" d="M800 507L1142 318L833 551Z"/>
      </g>
      <g transform="translate(-560 -247)" class="lab">
        <text x="709" y="258">100</text><text x="709" y="301">100</text><text x="709" y="343">100</text><text x="709" y="386">100</text><text x="709" y="428">100</text><text x="709" y="471">100</text><text x="709" y="513">100</text><text x="709" y="556">100</text>
        <text x="771" y="613">100</text><text x="813" y="613">100</text><text x="856" y="613">100</text><text x="898" y="613">100</text><text x="941" y="613">100</text><text x="983" y="613">100</text><text x="1026" y="613">100</text><text x="1068" y="613">100</text><text x="1111" y="613">100</text><text x="1153" y="613">100</text>
      </g>
      <g transform="translate(-560 -247)" class="dimt">
        <text x="958" y="293">807</text><text x="1159" y="440">549</text><text x="757" y="534">104</text><text x="807" y="582">78</text>
      </g>
    </svg>
    <div class="dfoot"><button>动态输入</button></div>
  </div>
  <div class="dstatus"><span class="pos">坐标 (X: 698 Y: 763</span><span class="msg">请选择下一点<svg width="10" height="10" viewBox="0 0 10 10"><path d="M8 0h2v2H8zM4 4h2v2H4zM8 4h2v2H8zM0 8h2v2H0zM4 8h2v2H4zM8 8h2v2H8z" fill="#bbb"/></svg></span></div>
</section>

<div class="speed">
  <svg width="48" height="48" viewBox="0 0 48 48"><circle cx="24" cy="24" r="24" fill="#b8b8b8"/><circle cx="24" cy="24" r="23" fill="#fafafa"/><circle cx="24" cy="24" r="21.500" fill="url(#gGreen)"/><ellipse cx="25" cy="7" rx="5" ry="2" fill="#b9e0c8"/><text x="24" y="28" text-anchor="middle" class="pct">68%</text></svg>
  <div class="rates"><span><svg width="8" height="9" viewBox="0 0 8 9"><path d="M4 0l4 4H5v5H3V4H0z" fill="#f05a40"/></svg>0.04K/s</span><span><svg width="8" height="9" viewBox="0 0 8 9"><path d="M4 9l4-4H5V0H3v5H0z" fill="#1ba050"/></svg>0.04K/s</span></div>
  <svg width="20" height="20" viewBox="0 0 20 20"><circle cx="9" cy="11" r="8.500" fill="#2f7ddc"/><path d="M9 6v10M4 11h10" stroke="#fff" stroke-width="2.500"/><circle cx="15" cy="5" r="4" fill="#dc2424"/></svg>
</div>

<div class="ime">
  <svg width="28" height="28"><use href="#sogou"/></svg>
  <div class="imebar">
    <b>A</b>
    <svg viewBox="0 0 16 16"><circle cx="5" cy="5" r="2"/><path d="M10 8h3q0 4-3 5z"/></svg>
    <svg viewBox="0 0 16 16"><rect x="5" y="0" width="6" height="9" rx="3"/><path d="M3 6q0 5 5 5t5-5M8 11v4M5 15h6" class="st"/></svg>
    <svg viewBox="0 0 16 16"><rect x="0" y="2" width="16" height="12" rx="2"/><path d="M2 5h12M2 8h12" stroke="#fff" stroke-width="1.500" stroke-dasharray="2 1"/><path d="M4 11.500h8" stroke="#fff"/></svg>
    <svg viewBox="0 0 16 16" class="dim"><circle cx="7" cy="4" r="3.500"/><path d="M1 15q0-7 6-7t6 7z"/><path d="M8 9.500h7v5H8z" fill="#fff" stroke="#b4c0d4"/></svg>
    <svg viewBox="0 0 16 16"><path d="M5 1q3 2 6 0l5 3-2 4-2-1v8H4V7L2 8 0 4z"/></svg>
    <svg viewBox="0 0 16 16"><path d="M1 13l7-7Q7 1 13 1l-3 3 2 2 3-3q1 6-5 5l-7 7q-3 0-2-2z"/></svg>
  </div>
</div>
</body>
</html>
```
FILE: styles.css
```css
* { box-sizing: border-box; }
html, body { height: 100%; }
body {
  margin: 0; display: flex; flex-direction: column; position: relative;
  overflow: hidden; background: #f0f0f0; color: #000;
  font: 12px/16px "Open Sans", "Noto Sans CJK SC", sans-serif;
}
button, input, select { font: inherit; color: inherit; }
button { margin: 0; padding: 0; border: 0; background: none; white-space: nowrap; }
h1, h2, ul { margin: 0; padding: 0; font-weight: 400; list-style: none; }
svg { flex: none; display: block; }
.defs { position: absolute; width: 0; height: 0; }
.i16 { width: 16px; height: 16px; }
.i10 { width: 10px; height: 10px; }
.m { font-family: "Liberation Mono", monospace; font-size: 10px; }

.titlebar { display: flex; align-items: center; height: 24px; padding-left: 2px; gap: 5px; background: #fff; color: #999; }
.titlebar h1 { flex: 1; font: 13px/16px Roboto, "Noto Sans CJK SC", sans-serif; white-space: nowrap; }
.winbtns { display: flex; align-self: flex-start; padding-right: 2px; }
.winbtns button { width: 46px; height: 20px; display: grid; place-items: center; }
.winbtns svg { width: 12px; height: 12px; fill: none; stroke: #888; }

.menubar { display: flex; align-items: center; height: 30px; padding-left: 7px; }
.menus { display: flex; gap: 11px; margin-right: 16px; }
.menubar > .tb { margin-right: 7px; }
.tip { flex: 1; align-self: stretch; display: grid; place-items: center; color: #0d6d68; text-decoration: none; background: #f8f8f8; }
.account { display: flex; align-items: center; align-self: stretch; gap: 8px; width: 240px; padding-left: 4px; margin-left: 2px; background: linear-gradient(#fbfbfb, #f3f3f3); }
.account > .i16 { margin-left: 2px; }
.account .more { margin-left: auto; }
.more { align-self: flex-start; font: bold 14px/14px "Liberation Sans", sans-serif; padding-right: 5px; }

.toolbar { display: flex; align-items: center; gap: 7px; background: linear-gradient(#fcfcfc, #f0f0f0); }
.tb { display: flex; align-items: center; gap: 4px; }
.off { color: #808080; }
.arr { width: 8px; height: 4px; margin-left: -4px; }
.arr::after { content: ""; display: block; width: 0; margin-left: 3px; border: 3px solid transparent; border-top-color: currentColor; border-bottom: 0; }
.arr.wide { margin-left: 0; }
.sep { flex: none; width: 1px; height: 18px; margin-right: -2px; background: #b8b8b8; }

.main-tools { height: 30px; gap: 0; background: #f0f0f0; }
.group { display: flex; align-items: center; gap: 7px; height: 28px; background: linear-gradient(#fcfcfc, #f0f0f0); }
.first { width: 153px; padding-left: 5px; }
.first .more { margin-left: auto; }
.second { margin-left: 2px; padding-left: 2px; width: 550px; }
.third { flex: 1; }
.third .more { margin-left: auto; }
.sigma { width: 16px; text-align: center; font: bold 14px/16px "Liberation Serif", serif; }
.dimcombo { height: 24px; width: 62px; padding-left: 3px; border: 1px solid #777; margin-right: -3px; }
.dimcombo .arr { margin-left: 2px; }
.swatch { width: 14px; height: 10px; background: #ececec; border: 1px solid #c8c8c8; }

.work { flex: 1; min-height: 0; display: flex; }
.nav { width: 197px; display: flex; flex-direction: column; font-family: "Noto Sans CJK SC", sans-serif; border-left: 1px solid #a0a0a0; }
.navhead { display: flex; align-items: center; gap: 8px; height: 16px; padding-right: 4px; border: 1px solid #999; border-left: 0; }
.navhead span { flex: 1; }
.bigbtn { height: 22px; padding-bottom: 2px; border: 1px solid #a0a0a0; border-left: 0; border-top-color: #fff; box-shadow: inset 1px 1px #fff; background: #efefef; }
.navhead + .bigbtn { margin-top: 1px; border-top-color: #a0a0a0; }
.expand { height: 27px; padding: 4px 6px; background: linear-gradient(#f0f0f0, #fcfcfc 30%, #f0f0f0); }
.tree { flex: 1; min-height: 0; margin-left: 1px; padding: 1px 0 0 6px; background: #fff; border: 1px solid #828790; overflow: hidden; }
.tree + .bigbtn { margin-top: 1px; }
.tree li { display: flex; align-items: center; height: 16px; white-space: nowrap; gap: 5px; }
.chev { width: 12px; height: 12px; display: grid; place-items: center; }
.chev::after { content: ""; width: 6px; height: 6px; border: solid #a0a0a0; border-width: 1px 1px 0 0; transform: rotate(45deg); }
.chev.open::after { border-color: #333; border-width: 2px 2px 0 0; transform: rotate(135deg); }
.stub { width: 3px; height: 1px; margin: 0 -5px 0 -3px; background: repeating-linear-gradient(90deg, #888 0 1px, transparent 1px 2px); }
.sub { padding-left: 25px; }
.sub.run { background: repeating-linear-gradient(#888 0 1px, transparent 1px 2px) 6px 0/1px 100% no-repeat; }
.branch {
  flex: none; width: 10px; height: 16px;
  background: repeating-linear-gradient(#888 0 1px, transparent 1px 2px) 0 0/1px 100% no-repeat,
    repeating-linear-gradient(90deg, #888 0 1px, transparent 1px 2px) 0 8px/100% 1px no-repeat;
}
.branch.end { background-size: 1px 8px, 100% 1px; }
.sub .branch { margin-right: -4px; }
.picked { display: flex; align-items: center; gap: 5px; height: 16px; margin-left: -2px; padding-left: 2px; background: #d9d9d9; }
.book { width: 15px; height: 15px; margin-left: -4px; }
.newtag { align-self: flex-start; margin-left: -4px; font: bold 9px/9px "Liberation Sans", sans-serif; background: #ffe000; }

.right { flex: 1; min-width: 0; display: flex; flex-direction: column; margin-left: 6px; }
.comp-tools { height: 28px; padding-left: 4px; }
.floor { display: flex; align-items: center; gap: 5px; margin-left: -3px; }
.floor select { width: 63px; height: 24px; margin-right: -3px; padding: 0 4px 0 3px; border: 0; appearance: none; background: conic-gradient(from -45deg at 50% 100%, #000 90deg, transparent 0) 53px 11px/6px 3px no-repeat, #fff; }
.panes { flex: 1; min-height: 0; display: flex; gap: 3px; }
.complist { width: 183px; display: flex; flex-direction: column; margin: 3px 0 2px; border-right: 2px solid #888; background: #fff; }
.search { display: flex; gap: 5px; padding: 2px 0 1px 1px; align-items: center; }
.search input { width: 157px; height: 24px; padding: 0 2px 4px 3px; border: 1px solid #777; color: #777; font-family: "Noto Sans CJK SC", sans-serif; }
.search input::placeholder, .cortana input::placeholder { color: inherit; opacity: 1; }
.listbox { flex: 1; min-height: 0; display: flex; border: 1px solid #828790; border-right: 0; padding-top: 1px; overflow: hidden; }
.items { flex: 1; padding-left: 32px; font: 10px/16px "Liberation Mono", monospace; }
.items li { display: flex; height: 16px; }
.items .branch { width: 8px; }
.items span { display: flex; align-items: center; gap: 5px; padding: 0 4px 0 2px; }
.items .sel span { background: #316ac5; }
.scroll { width: 17px; display: flex; flex-direction: column; background: #f0f0f0; }
.sarr { width: 16px; height: 17px; fill: none; stroke: #505050; stroke-width: 2; }
.track { flex: 339; }
.thumb { flex: 186; background: #cdcdcd; }

.props { flex: 1; min-width: 0; display: flex; flex-direction: column; padding-right: 1px; font-family: "Noto Sans CJK SC", sans-serif; }
.ptab { align-self: flex-start; height: 21px; padding: 1px 7px 0; line-height: 16px; background: #fff; border: 1px solid #d9d9d9; border-bottom: 0; }
.pbody { flex: 1; min-height: 0; padding: 3px 2px 2px 4px; margin-bottom: 1px; background: #fff; border: 1px solid #d9d9d9; }
.pframe { height: 100%; border: 1px solid #a0a0a0; border-top-color: #777; overflow: hidden; }
.props table { border-collapse: collapse; table-layout: fixed; width: 210px; }
.props tr { height: 19px; }
.props thead tr { height: 23px; }
.props th, .props td { padding: 0; font-weight: 400; white-space: nowrap; border: solid #c0c0c0; border-width: 0 1px 1px 0; line-height: 16px; overflow: hidden; }
.props th { background: linear-gradient(#fcfcfc, #ececec); }
.props th:first-child { width: 22px; font: 11px/16px "Open Sans", sans-serif; }
.props td { padding-left: 18px; }
.blue { color: #00f; }
.gray { color: #808080; }
.props td.grp { padding-left: 1px; }
.grp::before { content: "+"; display: inline-block; vertical-align: top; width: 13px; height: 13px; margin: 2px 4px 0 0; border: 1px solid #aaa; background: #fff; color: #000; font: 14px/11px "Liberation Mono", monospace; text-align: center; }
.props .cur th { background: #ffd28c; color: #603; }
.props .cur td { background: #0078d7; color: #fff; }

.status { display: flex; gap: 2px; height: 22px; padding-top: 2px; font: 12px/18px "Noto Sans CJK SC", sans-serif; }
.status > span { border: 1px solid #d4d4d4; padding-left: 1px; background: #f8f8f8; white-space: nowrap; }
.s1 { width: 148px; } .s2 { width: 78px; } .s3 { width: 98px; } .s4 { width: 48px; } .s5 { flex: 1; } .s6 { width: 70px; }

.taskbar { display: flex; height: 40px; color: #fff; background: #020d12; }
.start { width: 48px; display: grid; place-items: center; background: #000; }
.cortana { display: flex; align-items: center; width: 344px; padding: 0 14px 0 8px; gap: 4px; background: #333; color: #a0a0a0; }
.cortana input { flex: 1; min-width: 0; border: 0; padding: 0; background: none; font-size: 14px; }
.apps { display: flex; gap: 2px; }
.apps button { width: 48px; display: grid; place-items: center; border-bottom: 2px solid transparent; }
.apps svg { width: 24px; height: 24px; }
.apps .active { background: #353f44; border-color: #76b9ed; }
.apps .running { width: 40px; margin: 0 4px; border-color: #76b9ed; }
.wh { color: #e8e8e8; }
.ieb { color: #3ca4ec; }
.cpu { width: 72px; margin-left: auto; padding-top: 3px; line-height: 17px; text-align: center; }
.tray { display: flex; align-items: center; gap: 8px; margin-left: 6px; }
.tray svg { fill: none; stroke: #fff; }
.tray svg:last-child { stroke: none; }
.tray b { font-size: 15px; width: 14px; text-align: center; margin: 0 4px 0 0; font-weight: 600; }
.clock { width: 88px; padding-top: 2px; line-height: 18px; text-align: center; }
.notes { width: 54px; padding: 9px 0 0 11px; border-right: 1px solid #333; background: #000; }
.badge { fill: #fff; font: bold 11px "Open Sans", sans-serif; }

.dialog {
  position: absolute; left: 549px; right: 52px; top: 137px; bottom: 62px;
  display: flex; flex-direction: column; padding: 0 7px 6px 6px;
  border: 1px solid #333; border-right-color: #5cc8e8; border-bottom-color: #5cc8e8;
  background: linear-gradient(#9ab4d0, #b9cfe8 29px);
}
.dialog h2 { height: 29px; font-size: 12px; line-height: 34px; }
.dtabs { display: flex; align-items: flex-end; height: 20px; background: #f0f0f0; font-family: "Noto Sans CJK SC", sans-serif; }
.dtabs button { width: 38px; height: 18px; padding: 0 5px 1px 0; border: 1px solid #d9d9d9; border-bottom: 0; }
.dtabs .on { width: 45px; height: 20px; border: 0; background: #fff; }
.dpage { flex: 1; min-height: 0; display: flex; flex-direction: column; margin-right: -1px; padding: 3px 2px 1px 4px; border: 1px solid #d9d9d9; border-left: 0; border-right-width: 3px; border-right-color: #f0f0f0; background: #fff; }
.dtools, .dcoords { flex: none; height: 28px; }
.dtools { padding-left: 4px; }
.grip { flex: none; width: 2px; height: 16px; margin-right: -2px; background: repeating-linear-gradient(#bbb 0 2px, transparent 2px 4px); }
.dcoords { padding-left: 4px; gap: 4px; }
.radios { display: flex; gap: 11px; height: 18px; margin-left: 1px; padding-right: 10px; background: #efefef; font-family: "Noto Sans CJK SC", sans-serif; }
.radios label { display: flex; align-items: center; gap: 8px; }
.radios input { appearance: none; flex: none; width: 11px; height: 11px; margin: 0; border: 1px solid #999; border-radius: 50%; background: #fff; }
.radios input:checked { background: radial-gradient(#000 0 2px, #fff 3px); border-color: #333; }
.num { display: flex; align-items: center; gap: 6px; margin-left: 2px; }
.spin { position: relative; display: flex; width: 78px; height: 23px; border: 1px solid #777; color: #777; }
.spin input { width: 100%; border: 0; padding: 0 17px 2px 0; background: none; text-align: right; }
.ud { position: absolute; right: 4px; top: 4px; width: 6px; height: 13px; }
.ud::before, .ud::after { content: ""; position: absolute; left: 0; border: 3px solid transparent; }
.ud::before { top: -2px; border-bottom-color: #666; border-top-width: 0; }
.ud::after { bottom: -2px; border-top-color: #666; border-bottom-width: 0; }
.unit { margin: 0 8px 0 2px; }
.canvas { flex: 1; min-height: 0; width: 100%; background: #000; }
.gl { stroke: #c0c0c0; fill: none; }
.ax { stroke: #008000; fill: none; }
.dm { stroke: #fff; fill: none; }
.poly { stroke: #f00; stroke-width: 3; fill: none; }
.lab { fill: #c0c0c0; font: 11px "Liberation Mono", monospace; }
.dimt { fill: #0f0; font: bold 17px "Liberation Serif", serif; }
.dfoot { height: 27px; padding: 2px; background: #f0f0f0; }
.dfoot button { width: 58px; height: 23px; border: 1px solid #0078d7; background: #e5f1fb; }
.dstatus { display: flex; gap: 2px; padding-top: 3px; height: 26px; background: #fff; font-family: "Noto Sans CJK SC", sans-serif; line-height: 20px; }
.dstatus > span { border: 1px solid #d9d9d9; background: linear-gradient(#fcfcfc, #f0f0f0); white-space: nowrap; overflow: hidden; padding-left: 1px; }
.pos { width: 98px; font-family: "Open Sans", "Noto Sans CJK SC", sans-serif; font-size: 11px; }
.msg { flex: 1; display: flex; justify-content: space-between; }
.msg svg { align-self: flex-end; margin: 1px; }

.speed { position: absolute; z-index: 1; left: 576px; top: 35px; width: 127px; height: 48px; display: flex; align-items: center; gap: 4px; }
.speed::before { content: ""; position: absolute; z-index: -1; inset: 5px 0 4px 10px; border-radius: 20px; border: 1px solid #bbb; background: linear-gradient(#f6f6f6, #e4e4e4); box-shadow: 0 2px 5px #888; }
.rates { display: flex; flex-direction: column; width: 48px; font-size: 10px; line-height: 15px; }
.rates span { display: flex; align-items: center; gap: 6px; }
.pct { fill: #fff; font: 14px "Liberation Sans", sans-serif; }

.ime { position: absolute; left: 867px; top: 0; display: flex; }
.imebar { display: flex; align-items: center; gap: 6px; height: 24px; margin: 3px 0 0 -1px; padding: 0 4px 0 7px; width: 160px; border: 1px solid #b4c8dc; border-left: 0; background: #fcfdff; color: #2274c8; }
.imebar svg { width: 16px; height: 16px; fill: #2274c8; }
.imebar b { width: 16px; font-size: 17px; text-align: center; }
.imebar .st { fill: none; stroke: #2274c8; stroke-width: 1.5; }
.imebar .dim { fill: #b4c0d4; }
```
